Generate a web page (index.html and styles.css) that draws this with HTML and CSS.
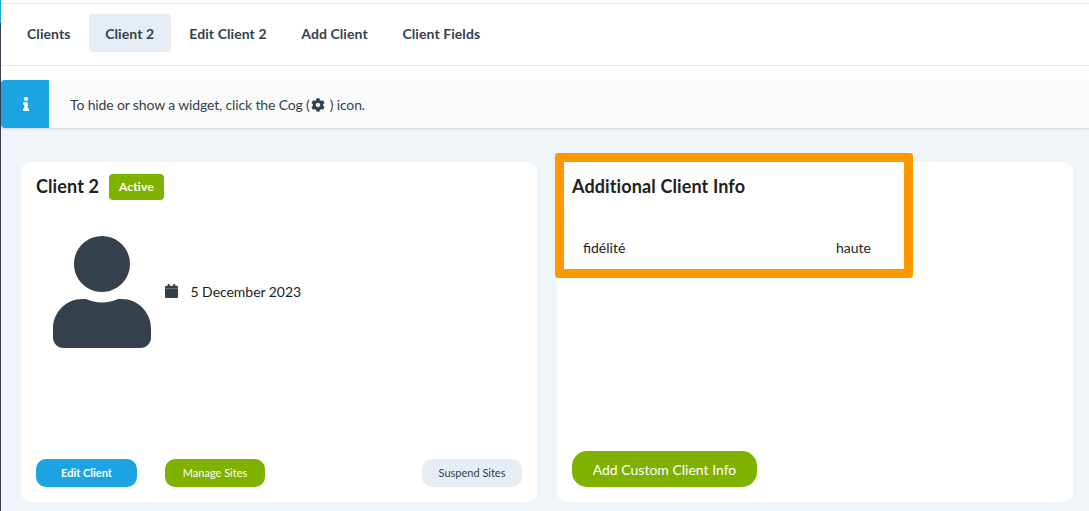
FILE: index.html
```
<!DOCTYPE html>
<html lang="en">
<head>
<meta charset="utf-8">
<title>Client 2</title>
<link rel="stylesheet" href="styles.css">
</head>
<body>
<div class="app">
  <div class="rail"></div>
  <main class="main">
    <nav class="tabs">
      <a class="tab">Clients</a>
      <a class="tab active">Client 2</a>
      <a class="tab">Edit Client 2</a>
      <a class="tab">Add Client</a>
      <a class="tab">Client Fields</a>
    </nav>
    <div class="notice">
      <div class="notice-icon">
        <svg width="6" height="14" viewBox="0 0 192 512" preserveAspectRatio="none" fill="currentColor"><path d="M20 424.229h20V279.771H20c-11.046 0-20-8.954-20-20V212c0-11.046 8.954-20 20-20h112c11.046 0 20 8.954 20 20v212.229h20c11.046 0 20 8.954 20 20V492c0 11.046-8.954 20-20 20H20c-11.046 0-20-8.954-20-20v-47.771c0-11.046 8.954-20 20-20zM96 0C56.235 0 24 32.235 24 72s32.235 72 72 72 72-32.235 72-72S135.764 0 96 0z"/></svg>
      </div>
      <div class="notice-text"><span>To hide or show a widget, click the Cog (</span><svg class="cog" width="14" height="14" viewBox="0 0 512 512" fill="currentColor"><path d="M487.4 315.7l-42.6-24.6c4.3-23.2 4.3-47 0-70.2l42.6-24.6c4.9-2.8 7.1-8.6 5.5-14-11.1-35.6-30-67.8-54.7-94.6-3.8-4.1-10-5.1-14.8-2.3L380.8 110c-17.9-15.4-38.5-27.3-60.8-35.1V25.8c0-5.6-3.9-10.5-9.4-11.7-36.7-8.2-74.3-7.8-109.2 0-5.5 1.2-9.4 6.1-9.4 11.7V75c-22.2 7.9-42.8 19.8-60.8 35.1L88.7 85.5c-4.9-2.8-11-1.9-14.8 2.3-24.7 26.7-43.6 58.9-54.7 94.6-1.7 5.4.6 11.2 5.5 14L67.3 221c-4.3 23.2-4.3 47 0 70.2l-42.6 24.6c-4.9 2.8-7.1 8.6-5.5 14 11.1 35.6 30 67.8 54.7 94.6 3.8 4.1 10 5.1 14.8 2.3l42.6-24.6c17.9 15.4 38.5 27.3 60.8 35.1v49.2c0 5.6 3.9 10.5 9.4 11.7 36.7 8.2 74.3 7.8 109.2 0 5.5-1.2 9.4-6.1 9.4-11.7v-49.2c22.2-7.9 42.8-19.8 60.8-35.1l42.6 24.6c4.9 2.8 11 1.9 14.8-2.3 24.7-26.7 43.6-58.9 54.7-94.6 1.5-5.5-.7-11.3-5.6-14.1zM256 336c-44.1 0-80-35.9-80-80s35.9-80 80-80 80 35.9 80 80-35.9 80-80 80z"/></svg><span>) icon.</span></div>
    </div>
    <div class="cards">
      <section class="card">
        <header class="card-head">
          <h2>Client 2</h2>
          <span class="label">Active</span>
        </header>
        <div class="profile">
          <svg width="98" height="112" viewBox="0 0 448 512" fill="currentColor"><path d="M224 256c70.7 0 128-57.3 128-128S294.7 0 224 0 96 57.3 96 128s57.3 128 128 128zm89.6 32h-16.7c-22.2 10.2-46.9 16-72.9 16s-50.6-5.8-72.9-16h-16.7C60.2 288 0 348.2 0 422.4V464c0 26.5 21.5 48 48 48h352c26.5 0 48-21.5 48-48v-41.6c0-74.2-60.2-134.4-134.4-134.4z"/></svg>
          <svg class="calendar" width="13" height="14" viewBox="0 0 448 512" preserveAspectRatio="none" fill="currentColor"><path d="M12 178h424c6.6 0 12 5.4 12 12v274c0 26.500-21.500 48-48 48H48c-26.500 0-48-21.500-48-48V190c0-6.600 5.400-12 12-12zm436-30v-36c0-26.500-21.500-48-48-48h-48V12c0-6.600-5.400-12-12-12h-40c-6.600 0-12 5.400-12 12v52H160V12c0-6.600-5.400-12-12-12h-40c-6.600 0-12 5.400-12 12v52H48C21.500 64 0 85.500 0 112v36c0 6.600 5.400 12 12 12h424c6.600 0 12-5.400 12-12z"/></svg>
          <span class="date">5 December 2023</span>
        </div>
        <footer class="actions">
          <a class="button blue">Edit Client</a>
          <a class="button green">Manage Sites</a>
          <a class="button pale">Suspend Sites</a>
        </footer>
      </section>
      <section class="card">
        <header class="card-head"><h2>Additional Client Info</h2></header>
        <div class="field"><span>fidélité</span><span>haute</span></div>
        <footer class="actions"><a class="button green large">Add Custom Client Info</a></footer>
        <div class="highlight"></div>
      </section>
    </div>
  </main>
</div>
</body>
</html>
```
FILE: styles.css
```
* { box-sizing: border-box; }
body {
  margin: 0;
  font-family: Lato, "Liberation Sans", sans-serif;
  font-size: 14px;
  line-height: 20px;
  color: #212121;
}
svg { display: block; flex: none; }
.app { display: flex; width: 1089px; height: 511px; overflow: hidden; }
.rail { width: 1px; background: linear-gradient(#1ca4e2 23px, #34414d 23px); }
.main {
  flex: 1;
  display: flex;
  flex-direction: column;
  padding-top: 3px;
  background: linear-gradient(#fff 80px, #f0f5fa 80px);
}
.tabs {
  display: flex;
  align-items: center;
  gap: 2.7px;
  height: 63px;
  padding-left: 10px;
  padding-bottom: 3px;
  border-top: 1px solid #e7e9f0;
  border-bottom: 1px solid #e7e9f0;
  color: #34414d;
  font-weight: 700;
  letter-spacing: .08px;
}
.tab { padding: 10px 16px 8px; border-radius: 4px; }
.tab.active { padding-right: 16.5px; background: #e6edf5; }
.notice {
  display: flex;
  height: 48px;
  margin-top: 14px;
  border-radius: 4px 0 0 4px;
  background: #fafafa;
  box-shadow: 0 1px 2px rgba(34, 36, 38, .15);
  color: #34414d;
}
.notice-icon {
  display: flex;
  align-items: center;
  justify-content: center;
  width: 48px;
  padding-left: 2px;
  border-radius: 4px 0 0 4px;
  background: #1ca4e2;
  color: #fff;
}
.notice-text {
  display: flex;
  align-items: center;
  padding: 2px 0 0 21px;
  letter-spacing: -.14px;
}
.cog { margin: 0 5px 1px 1px; }
.cards {
  display: grid;
  grid-template-columns: 516px 516px;
  gap: 20px;
  padding: 34px 0 0 20px;
}
.card {
  position: relative;
  display: flex;
  flex-direction: column;
  height: 340px;
  padding: 12px 15px 15px;
  border-radius: 10px;
  background: #fff;
}
.card-head { display: flex; align-items: center; gap: 10px; height: 26px; }
h2 {
  margin: 0;
  padding-bottom: 2px;
  font-size: 18px;
  line-height: 24px;
  font-weight: 700;
  font-variant-ligatures: none;
  letter-spacing: .12px;
}
.label {
  padding: 3px 10px;
  border-radius: 4px;
  background: #7fb100;
  color: #fff;
  font-size: 12px;
  font-weight: 700;
  letter-spacing: .1px;
}
.profile { display: flex; align-items: center; padding: 36px 0 0 17px; color: #34414d; }
.calendar { margin: 0 12.5px 2px 14px; }
.date { color: #212121; letter-spacing: -.04px; }
.field {
  display: flex;
  justify-content: space-between;
  padding: 38px 187px 0 11px;
}
.actions { display: flex; align-items: flex-end; gap: 28px; margin-top: auto; }
.button {
  width: 100px;
  height: 28px;
  border-radius: 10px;
  font-size: 11px;
  line-height: 28px;
  text-align: center;
  white-space: nowrap;
}
.blue { width: 101px; background: #1ca4e2; color: #fff; font-weight: 700; }
.green { background: #7fb100; color: #fff; }
.pale { margin-left: auto; background: #e6edf5; color: #34414d; }
.large { width: 185px; height: 36px; border-radius: 15px; font-size: 14px; line-height: 38px; }
/* Callout frame around the custom field */
.highlight {
  position: absolute;
  left: -2px;
  top: -9px;
  width: 358px;
  height: 125px;
  border: 9px solid #ff9800;
  border-radius: 3px;
}
```
